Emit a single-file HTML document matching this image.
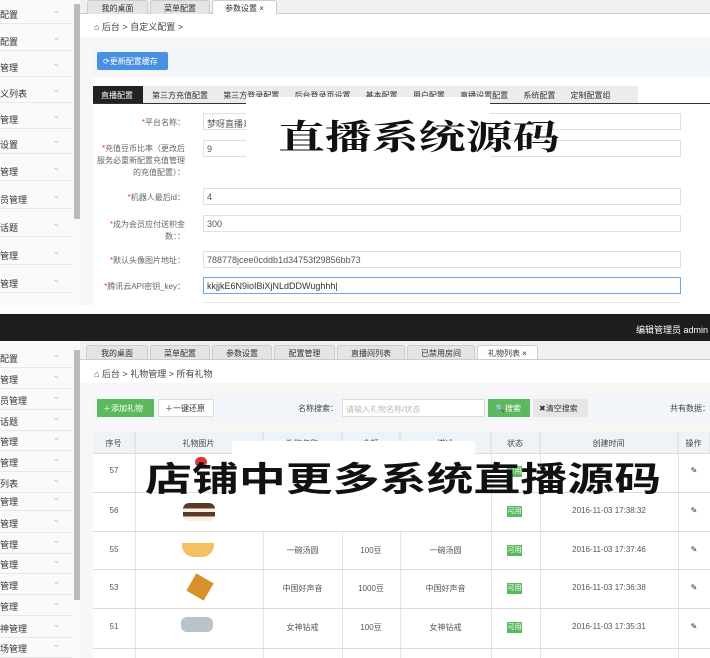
<!DOCTYPE html>
<html><head><meta charset="utf-8"><style>
*{margin:0;padding:0;box-sizing:border-box}
body{width:710px;height:658px;overflow:hidden;background:#fff;font-family:"Liberation Sans","Noto Sans CJK SC",sans-serif;font-size:9px;color:#555;position:relative}
.a{position:absolute}
.si{position:absolute;left:0;width:72px;height:21px;border-bottom:1px solid #e8e8e8;font-size:9px;color:#333;padding:5px 0 0 0}
.si:after{content:"⌄";position:absolute;right:12px;top:2px;color:#bbb}
.tab{position:absolute;height:14px;background:#e4e4e4;border:1px solid #ccc;border-bottom:none;border-radius:3px 3px 0 0;font-size:8px;color:#333;text-align:center;padding-top:2px}
.inp{position:absolute;left:203px;width:478px;height:17px;border:1px solid #e0e0e0;background:#fff;font-size:9px;padding:3px 3px;color:#555}
.lbl{position:absolute;right:525px;font-size:8px;color:#666;text-align:right;line-height:12px}
.lbl b{color:#e33;font-weight:normal}
.th{position:absolute;top:432px;height:21px;background:#eef3f7;border-right:1px solid #e0e6ea;font-size:8px;color:#444;text-align:center;padding-top:6px}
.hl{position:absolute;left:93px;width:617px;height:1px;background:#ddd}
.vl{position:absolute;top:432px;width:1px;height:226px;background:#e5e5e5}
.c{position:absolute;font-size:8px;color:#555;text-align:center}
.ok{position:absolute;left:507px;width:15px;height:11px;background:#5cb85c;color:#fff;font-size:7px;text-align:center;line-height:11px}
.big{position:absolute;font-weight:bold;font-size:34px;line-height:34px;color:#111;white-space:nowrap;transform-origin:0 0;transform:scaleX(1.38)}
</style></head><body>
<!-- TOP SECTION -->
<div class="a" style="left:0;top:0;width:80px;height:305px;background:#fafafa"></div>
<div class="si" style="top:3px">配置</div>
<div class="si" style="top:30px">配置</div>
<div class="si" style="top:56px">管理</div>
<div class="si" style="top:82px">义列表</div>
<div class="si" style="top:108px">管理</div>
<div class="si" style="top:133px">设置</div>
<div class="si" style="top:160px">管理</div>
<div class="si" style="top:188px">员管理</div>
<div class="si" style="top:216px">话题</div>
<div class="si" style="top:244px">管理</div>
<div class="si" style="top:272px">管理</div>
<div class="a" style="left:74px;top:4px;width:6px;height:215px;background:#bbb"></div>
<div class="a" style="left:80px;top:120px;width:12px;height:35px;background:#eee"></div>
<div class="a" style="left:80px;top:0;width:630px;height:14px;background:#f0f0f0;border-bottom:1px solid #ccc"></div>
<div class="tab" style="left:87px;top:0;width:61px">我的桌面</div>
<div class="tab" style="left:150px;top:0;width:60px">菜单配置</div>
<div class="tab" style="left:212px;top:0;width:65px;background:#fff">参数设置 ×</div>
<div class="a" style="left:94px;top:20px;font-size:9px;color:#444">⌂ 后台 &gt; 自定义配置 &gt;</div>
<div class="a" style="left:80px;top:37px;width:630px;height:268px;background:#f7f7f7"></div>
<div class="a" style="left:93px;top:48px;width:617px;height:27px;background:#f2f6fa"></div>
<div class="a" style="left:97px;top:52px;width:71px;height:18px;background:#4a90e2;border-radius:2px;color:#fff;font-size:8px;padding:4px 0 0 6px">⟳更新配置缓存</div>
<div class="a" style="left:93px;top:78px;width:617px;height:227px;background:#fff"></div>
<div class="a" style="left:93px;top:86px;width:545px;height:17px;background:#ececec"></div>
<div class="a" style="left:93px;top:86px;width:50px;height:17px;background:#222;color:#fff;font-size:8px;padding:4px 0 0 8px">直播配置</div>
<div class="a" style="left:152px;top:90px;font-size:8px;color:#333;word-spacing:13px">第三方充值配置 第三方登录配置 后台登录页设置 基本配置 用户配置 直播设置配置 系统配置 定制配置组</div>
<div class="a" style="left:93px;top:103px;width:617px;height:1px;background:#333"></div>
<div class="lbl" style="top:117px"><b>*</b>平台名称：</div>
<div class="inp" style="top:113px">梦呀直播系</div>
<div class="lbl" style="top:143px"><b>*</b>充值豆币比率（更改后<br>服务必重新配置充值管理<br>的充值配置）：</div>
<div class="inp" style="top:140px">9</div>
<div class="lbl" style="top:192px"><b>*</b>机器人最后id：</div>
<div class="inp" style="top:188px">4</div>
<div class="lbl" style="top:219px"><b>*</b>成为会员应付送积金<br>数：：</div>
<div class="inp" style="top:215px">300</div>
<div class="lbl" style="top:255px"><b>*</b>默认头像图片地址：</div>
<div class="inp" style="top:251px">788778jcee0cddb1d34753f29856bb73</div>
<div class="lbl" style="top:281px"><b>*</b>腾讯云API密钥_key：</div>
<div class="inp" style="top:277px;border-color:#6aa6e8;color:#333">kkjjkE6N9ioIBiXjNLdDDWughhh|</div>
<div class="a" style="left:203px;top:302px;width:478px;height:1px;background:#e5e5e5"></div>
<div class="a" style="left:246px;top:97px;width:244px;height:68px;background:#fff"></div>
<div class="big" style="left:278px;top:118px;font-family:'Noto Serif CJK SC',serif">直播系统源码</div>

<!-- BLACK BAR -->
<div class="a" style="left:0;top:314px;width:710px;height:27px;background:#1e1e1e"></div>
<div class="a" style="left:636px;top:323px;color:#fff;font-size:9px">编辑管理员 admin</div>

<!-- BOTTOM SECTION -->
<div class="a" style="left:0;top:341px;width:80px;height:317px;background:#fafafa"></div>
<div class="si" style="top:347px">配置</div>
<div class="si" style="top:368px">管理</div>
<div class="si" style="top:389px">员管理</div>
<div class="si" style="top:410px">话题</div>
<div class="si" style="top:430px">管理</div>
<div class="si" style="top:451px">管理</div>
<div class="si" style="top:472px">列表</div>
<div class="si" style="top:490px">管理</div>
<div class="si" style="top:512px">管理</div>
<div class="si" style="top:533px">管理</div>
<div class="si" style="top:553px">管理</div>
<div class="si" style="top:574px">管理</div>
<div class="si" style="top:595px">管理</div>
<div class="si" style="top:617px">神管理</div>
<div class="si" style="top:637px">场管理</div>
<div class="a" style="left:74px;top:350px;width:6px;height:250px;background:#bbb"></div>
<div class="a" style="left:80px;top:465px;width:12px;height:40px;background:#eee"></div>
<div class="a" style="left:80px;top:341px;width:630px;height:19px;background:#f0f0f0;border-bottom:1px solid #ccc"></div>
<div class="tab" style="left:86px;top:345px;width:62px">我的桌面</div>
<div class="tab" style="left:150px;top:345px;width:60px">菜单配置</div>
<div class="tab" style="left:212px;top:345px;width:60px">参数设置</div>
<div class="tab" style="left:274px;top:345px;width:61px">配置管理</div>
<div class="tab" style="left:337px;top:345px;width:68px">直播间列表</div>
<div class="tab" style="left:407px;top:345px;width:68px">已禁用房间</div>
<div class="tab" style="left:477px;top:345px;width:61px;background:#fff">礼物列表 ×</div>
<div class="a" style="left:94px;top:367px;font-size:9px;color:#444">⌂ 后台 &gt; 礼物管理 &gt; 所有礼物</div>
<div class="a" style="left:80px;top:383px;width:630px;height:275px;background:#f7f7f7"></div>
<div class="a" style="left:93px;top:394px;width:617px;height:28px;background:#f2f6fa"></div>
<div class="a" style="left:97px;top:399px;width:57px;height:18px;background:#5cb85c;color:#fff;font-size:8px;padding:4px 0 0 6px">＋添加礼物</div>
<div class="a" style="left:158px;top:399px;width:56px;height:18px;background:#fff;border:1px solid #ddd;color:#333;font-size:8px;padding:3px 0 0 6px">＋一键还原</div>
<div class="a" style="left:298px;top:403px;font-size:8px;color:#444">名称搜索：</div>
<div class="a" style="left:342px;top:399px;width:143px;height:18px;background:#fff;border:1px solid #ddd;color:#bbb;font-size:8px;padding:4px 3px">请输入礼物名称/状态</div>
<div class="a" style="left:488px;top:399px;width:42px;height:18px;background:#5cb85c;color:#fff;font-size:8px;padding:4px 0 0 7px">🔍搜索</div>
<div class="a" style="left:533px;top:399px;width:55px;height:18px;background:#e6e6e6;color:#333;font-size:8px;padding:4px 0 0 6px">✖清空搜索</div>
<div class="a" style="left:670px;top:403px;font-size:8px;color:#444">共有数据：</div>
<div class="a" style="left:93px;top:432px;width:617px;height:226px;background:#fff"></div>
<div class="th" style="left:93px;width:42px">序号</div>
<div class="th" style="left:135px;width:128px">礼物图片</div>
<div class="th" style="left:263px;width:79px">礼物名称</div>
<div class="th" style="left:342px;width:58px">金额</div>
<div class="th" style="left:400px;width:91px">描述</div>
<div class="th" style="left:491px;width:49px">状态</div>
<div class="th" style="left:540px;width:138px">创建时间</div>
<div class="th" style="left:678px;width:32px">操作</div>
<div class="vl" style="left:135px"></div><div class="vl" style="left:263px"></div><div class="vl" style="left:342px"></div><div class="vl" style="left:400px"></div><div class="vl" style="left:491px"></div><div class="vl" style="left:540px"></div><div class="vl" style="left:678px"></div>
<div class="hl" style="top:453px"></div><div class="hl" style="top:492px"></div><div class="hl" style="top:531px"></div><div class="hl" style="top:569px"></div><div class="hl" style="top:608px"></div><div class="hl" style="top:648px"></div>
<div class="c" style="left:93px;width:42px;top:466px">57</div>
<div class="c" style="left:93px;width:42px;top:506px">56</div>
<div class="c" style="left:93px;width:42px;top:545px">55</div>
<div class="c" style="left:93px;width:42px;top:583px">53</div>
<div class="c" style="left:93px;width:42px;top:622px">51</div>
<div class="a" style="left:183px;top:503px;width:32px;height:18px;border-radius:6px;background:linear-gradient(#5a3a25 0 30%,#f5efe5 30% 50%,#5a3a25 50% 75%,#f5efe5 75%)"></div>
<div class="a" style="left:182px;top:543px;width:32px;height:14px;border-radius:0 0 12px 12px;background:#f5c060"></div>
<div class="a" style="left:190px;top:577px;width:20px;height:20px;background:#d9902a;transform:rotate(30deg)"></div>
<div class="a" style="left:181px;top:617px;width:32px;height:15px;border-radius:6px;background:#b8c4cc"></div>
<div class="a" style="left:195px;top:457px;width:12px;height:10px;border-radius:5px;background:#d33"></div>
<div class="c" style="left:263px;width:79px;top:545px">一碗汤圆</div>
<div class="c" style="left:342px;width:58px;top:545px">100豆</div>
<div class="c" style="left:400px;width:91px;top:545px">一碗汤圆</div>
<div class="c" style="left:263px;width:79px;top:583px">中国好声音</div>
<div class="c" style="left:342px;width:58px;top:583px">1000豆</div>
<div class="c" style="left:400px;width:91px;top:583px">中国好声音</div>
<div class="c" style="left:263px;width:79px;top:622px">女神钻戒</div>
<div class="c" style="left:342px;width:58px;top:622px">100豆</div>
<div class="c" style="left:400px;width:91px;top:622px">女神钻戒</div>
<div class="ok" style="top:506px">可用</div><div class="ok" style="top:545px">可用</div><div class="ok" style="top:583px">可用</div><div class="ok" style="top:622px">可用</div>
<div class="c" style="left:540px;width:138px;top:506px">2016-11-03 17:38:32</div>
<div class="c" style="left:540px;width:138px;top:545px">2016-11-03 17:37:46</div>
<div class="c" style="left:540px;width:138px;top:583px">2016-11-03 17:36:38</div>
<div class="c" style="left:540px;width:138px;top:622px">2016-11-03 17:35:31</div>
<div class="c" style="left:678px;width:32px;top:466px;color:#222">✎</div>
<div class="c" style="left:678px;width:32px;top:506px;color:#222">✎</div>
<div class="c" style="left:678px;width:32px;top:545px;color:#222">✎</div>
<div class="c" style="left:678px;width:32px;top:583px;color:#222">✎</div>
<div class="c" style="left:678px;width:32px;top:622px;color:#222">✎</div>
<div class="a" style="left:232px;top:441px;width:243px;height:90px;background:#fff"></div>
<div class="ok" style="top:466px">可用</div>
<div class="big" style="left:145px;top:460px;font-family:'Noto Sans CJK SC',sans-serif">店铺中更多系统直播源码</div>
</body></html>
